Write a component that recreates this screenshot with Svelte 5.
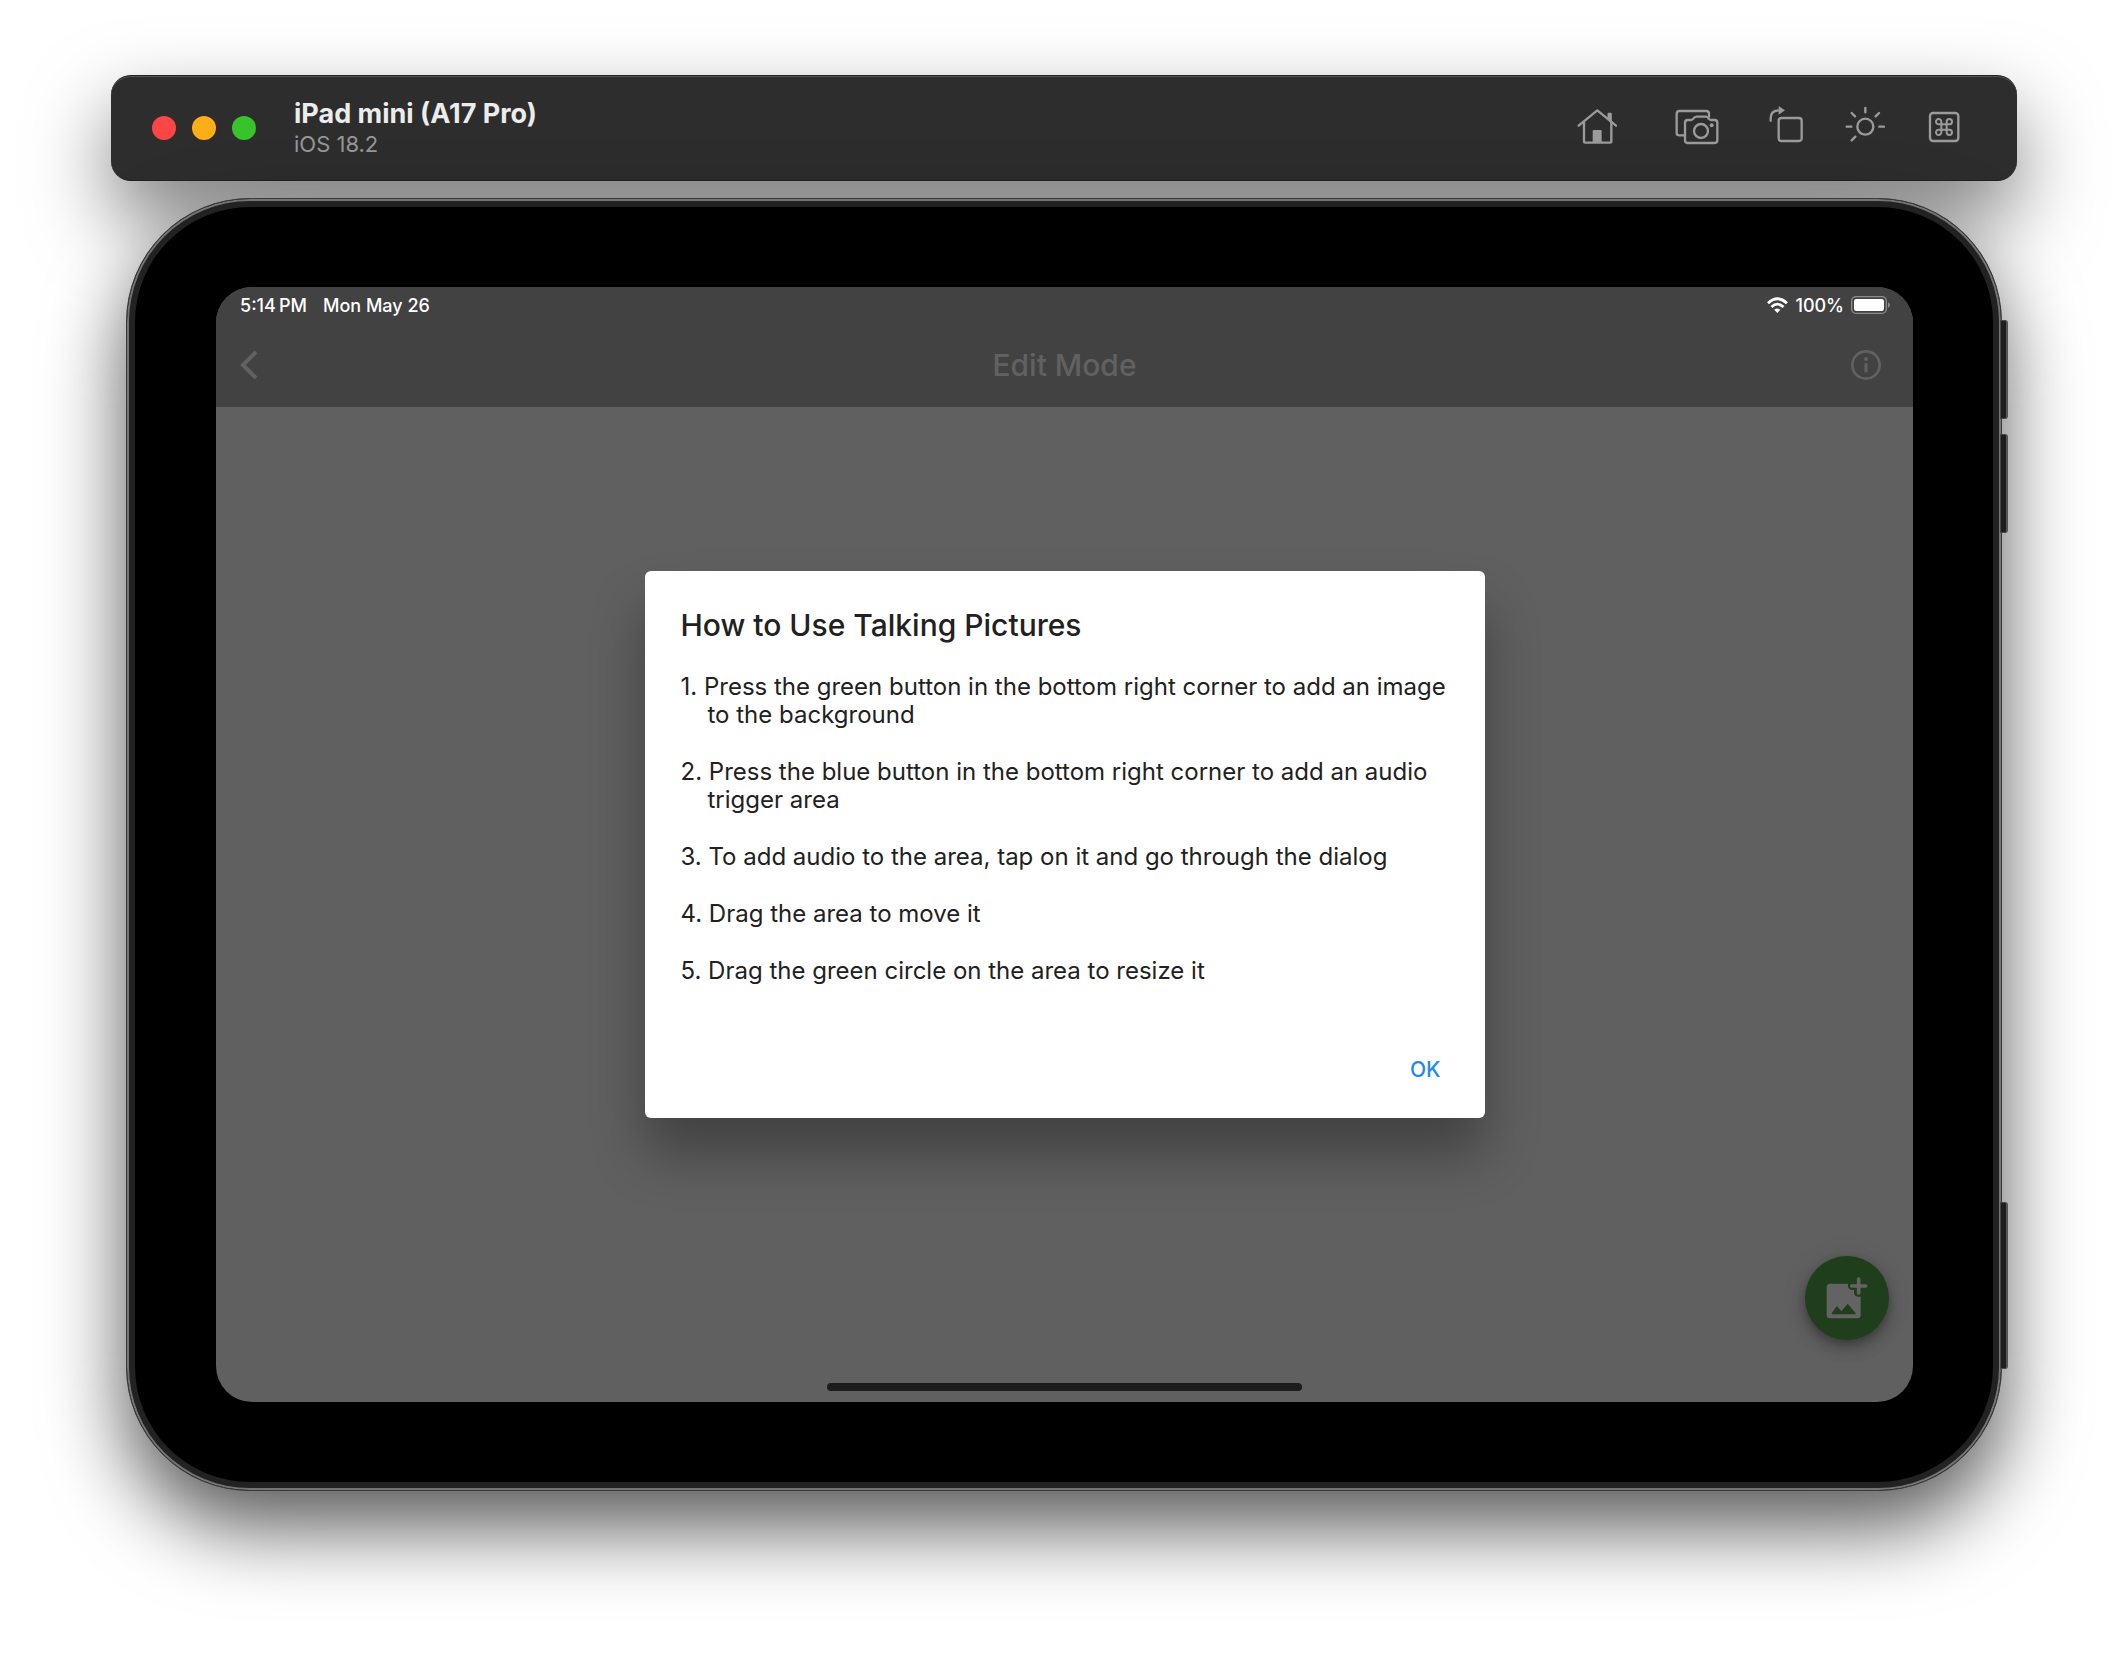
<script>
  const steps = [
    'Press the green button in the bottom right corner to add an image to the background',
    'Press the blue button in the bottom right corner to add an audio trigger area',
    'To add audio to the area, tap on it and go through the dialog',
    'Drag the area to move it',
    'Drag the green circle on the area to resize it'
  ];
</script>

<main class="desktop">
  <header class="toolbar">
    <div class="lights">
      <button class="light close" aria-label="Close"></button>
      <button class="light minimise" aria-label="Minimise"></button>
      <button class="light zoom" aria-label="Zoom"></button>
    </div>
    <div class="names">
      <strong class="device-name">iPad mini (A17 Pro)</strong>
      <span class="device-os">iOS 18.2</span>
    </div>
    <div class="tools">
      <button class="tool" aria-label="Home">
        <svg width="40" height="48" viewBox="112 132 120 144">
          <path d="M117 197 L173 151 L229 197" />
          <path d="M133 186 V244 Q133 248 137 248 H211 Q215 248 215 244 V186" />
          <path d="M207 178 V162 H213 V184" />
          <path class="solid" d="M159 213 Q159 210 162 210 H183 Q186 210 186 213 V248 H159 Z" />
        </svg>
      </button>
      <button class="tool" aria-label="Screenshot">
        <svg width="44" height="48" viewBox="406 132 132 144">
          <path d="M432 226 H419 Q411 226 411 218 V161 Q411 153 419 153 H500 Q508 153 508 161 V170" />
          <path d="M444 180 H454 Q458 180 461 176 Q465 170 471 170 H499 Q504 170 507 176 Q510 180 514 180 H525 Q533 180 533 188 V241 Q533 249 525 249 H444 Q436 249 436 241 V188 Q436 180 444 180 Z" />
          <circle cx="484" cy="213" r="21" />
          <circle class="solid" cx="516" cy="196" r="6" />
        </svg>
      </button>
      <button class="tool" aria-label="Rotate">
        <svg width="34" height="48" viewBox="688 132 102 144">
          <rect x="717" y="174" width="69" height="69" rx="8" />
          <path d="M693 182 V174 Q693 151 718 151" />
          <path class="solid" d="M717 138 L736 151 L717 164 Z" />
        </svg>
      </button>
      <button class="tool" aria-label="Appearance">
        <svg width="40" height="48" viewBox="916 132 120 144">
          <circle cx="977" cy="200" r="24" />
          <path d="M977 144 V157 M1018 159 L1008 169 M1033 200 H1019 M936 159 L946 169 M921 200 H935 M936 241 L947 230" />
        </svg>
      </button>
      <button class="tool" aria-label="Keyboard shortcuts">
        <svg width="32" height="48" viewBox="1164 132 96 144">
          <rect x="1170" y="159" width="85" height="84" rx="9" />
          <path class="thin" d="M1204 193 H1220 V209 H1204 Z M1204 193 H1197 A8 8 0 1 1 1204 185 Z M1220 193 V185 A8 8 0 1 1 1228 193 Z M1220 209 H1228 A8 8 0 1 1 1220 217 Z M1204 209 V217 A8 8 0 1 1 1197 209 Z" />
        </svg>
      </button>
    </div>
  </header>

  <section class="device">
    <i class="side-key volume-up"></i>
    <i class="side-key volume-down"></i>
    <i class="side-key power"></i>

    <div class="screen">
      <div class="bars">
        <div class="status">
          <span>5:14&#8201;PM</span>
          <span class="date">Mon May 26</span>
          <div class="status-right">
            <svg width="21" height="16" viewBox="147 81 61 46">
              <g fill="none" stroke="#fff" stroke-width="8">
                <path d="M150 99 Q177 73 205 99" />
                <path d="M160 110 Q177 93 195 110" />
              </g>
              <path fill="#fff" d="M168 118 Q177 110 186 118 L177 127 Z" />
            </svg>
            <span>100%</span>
            <svg width="40" height="18" viewBox="393 78 120 54">
              <rect x="395" y="80" width="104" height="50" rx="13" fill="none" stroke="#8c8c8c" stroke-width="4" />
              <rect x="402" y="87" width="90" height="36" rx="7" fill="#fff" />
              <path d="M504 97 Q510 100 510 105 Q510 110 504 113 Z" fill="#8c8c8c" />
            </svg>
          </div>
        </div>
        <nav class="nav">
          <button class="nav-button" aria-label="Back">
            <svg width="18" height="30" viewBox="0 0 18 30">
              <path d="M16 2 L3 15 L16 28" fill="none" stroke="#616161" stroke-width="4" />
            </svg>
          </button>
          <h1 class="nav-title">Edit Mode</h1>
          <button class="nav-button info" aria-label="Information">
            <svg width="30" height="30" viewBox="0 0 90 90">
              <circle cx="45" cy="45" r="41" fill="none" stroke="#616161" stroke-width="8" />
              <circle cx="45" cy="27" r="6" fill="#616161" />
              <path d="M45 43 V63" stroke="#616161" stroke-width="9" stroke-linecap="round" />
            </svg>
          </button>
        </nav>
      </div>

      <button class="add-image" aria-label="Add image">
        <svg width="42" height="42" viewBox="202 290 126 126">
          <path fill="#636363" d="M214 310 H268 V318 Q269 328 279 329 H286 V338 Q287 348 298 349 H306 V404 Q306 414 296 414 H214 Q204 414 204 404 V320 Q204 310 214 310 Z" />
          <path fill="#1f3e1b" d="M221 402 Q217 402 220 397 L235 377 L248 393 L267 370 L290 397 Q293 402 289 402 Z" />
          <path d="M300 296 V338 M279 317 H321" stroke="#636363" stroke-width="11" stroke-linecap="round" />
        </svg>
      </button>
      <i class="home-indicator"></i>

      <div class="overlay">
        <div class="dialog" role="dialog" aria-labelledby="dialog-title">
          <h2 id="dialog-title" class="dialog-title">How to Use Talking Pictures</h2>
          <ol class="steps">
            {#each steps as step, i}
              <li>{i + 1}. {step}</li>
            {/each}
          </ol>
          <button class="ok">OK</button>
        </div>
      </div>
    </div>
  </section>
</main>

<style>
  :global(body) {
    background: #fff;
  }

  .desktop {
    box-sizing: border-box;
    min-height: 100vh;
    padding: 75px 111px 164px;
    font-family: Inter, "Liberation Sans", sans-serif;
    overflow: hidden;
  }

  button {
    display: grid;
    place-items: center;
    padding: 0;
    border: 0;
    background: none;
    font-family: inherit;
  }

  svg {
    display: block;
  }

  .toolbar {
    box-sizing: border-box;
    display: flex;
    align-items: center;
    height: 106px;
    padding: 0 35px 0 41px;
    border: 1px solid #202120;
    border-width: 1px 0;
    border-radius: 20px;
    background: #2d2d2d;
    box-shadow:
      inset 0 1px 0 #545654,
      0 36px 80px rgba(0, 0, 0, 0.5);
  }

  .lights {
    display: flex;
    gap: 16px;
  }

  .light {
    width: 24px;
    height: 24px;
    border-radius: 50%;
  }

  .close {
    background: #fc4646;
  }

  .minimise {
    background: #fdae17;
  }

  .zoom {
    background: #38c32a;
  }

  .names {
    display: flex;
    flex-direction: column;
    margin-left: 38px;
  }

  .device-name {
    color: #ececec;
    font-size: 27px;
    line-height: 32px;
    font-weight: 700;
  }

  .device-os {
    color: #969696;
    font-size: 22px;
    line-height: 28px;
  }

  .tools {
    display: grid;
    grid-template-columns: 98px 102px 76px 82px 76px;
    margin-left: auto;
  }

  .tool svg {
    fill: none;
    stroke: #9b9b9b;
    stroke-width: 7;
    stroke-linecap: round;
    stroke-linejoin: round;
  }

  .tool .solid {
    fill: #9b9b9b;
    stroke: none;
  }

  .tool .thin {
    stroke-width: 6;
  }

  .device {
    position: relative;
    margin: 17px 15px 0;
    padding: 88px 88px 88px 89px;
    border: 1px solid #3a3a3a;
    border-radius: 124px;
    background: #000;
    box-shadow:
      inset 0 0 0 2px #747474,
      inset 0 0 0 8px #222,
      0 36px 80px rgba(0, 0, 0, 0.66);
  }

  .side-key {
    box-sizing: border-box;
    position: absolute;
    right: -7px;
    width: 8px;
    height: 99px;
    border: 1px solid #484848;
    border-right: 2px solid #555;
    border-radius: 0 3px 3px 0;
    background: #1e1e1e;
  }

  .volume-up {
    top: 121px;
  }

  .volume-down {
    top: 235px;
  }

  .power {
    bottom: 121px;
    height: 167px;
  }

  .screen {
    position: relative;
    aspect-ratio: 1697 / 1115;
    border-radius: 36px;
    background: #606060;
    overflow: hidden;
  }

  .bars {
    background: #424242;
  }

  .status {
    display: flex;
    align-items: center;
    height: 36px;
    padding: 0 22px 0 24px;
    color: #fff;
    font-size: 18px;
    font-weight: 500;
  }

  .date {
    margin-left: 16px;
  }

  .status-right {
    display: flex;
    align-items: center;
    gap: 7px;
    margin-left: auto;
  }

  .nav {
    display: grid;
    grid-template-columns: 60px 1fr 60px;
    align-items: center;
    height: 84px;
    padding: 0 12px;
  }

  .nav-button {
    justify-self: start;
    height: 60px;
    padding: 0 12px;
  }

  .info {
    justify-self: end;
    padding: 0 20px;
  }

  .nav-title {
    margin: 0;
    color: #616161;
    font-size: 30px;
    line-height: 36px;
    font-weight: 500;
    text-align: center;
  }

  .add-image {
    position: absolute;
    right: 24px;
    bottom: 62px;
    width: 84px;
    height: 84px;
    border-radius: 50%;
    background: #1f3e1b;
    box-shadow:
      0 4px 8px rgba(0, 0, 0, 0.2),
      0 9px 15px rgba(0, 0, 0, 0.18),
      0 2px 26px rgba(0, 0, 0, 0.1);
  }

  .home-indicator {
    position: absolute;
    right: 36%;
    bottom: 11px;
    left: 36%;
    height: 8px;
    border-radius: 4px;
    background: #1c1c1c;
  }

  .overlay {
    position: absolute;
    inset: 0;
    display: grid;
    place-items: center;
  }

  .dialog {
    box-sizing: border-box;
    display: flex;
    flex-direction: column;
    width: 840px;
    max-width: 90%;
    padding: 36px 32px 22px 36px;
    border-radius: 6px;
    background: #fff;
    color: #212121;
    box-shadow: 0 36px 54px rgba(0, 0, 0, 0.32);
  }

  .dialog-title {
    margin: 0 0 30px;
    font-size: 30px;
    line-height: 36px;
    font-weight: 500;
  }

  .steps {
    display: grid;
    gap: 29px;
    margin: 0;
    padding: 0;
    list-style: none;
    font-size: 24px;
    line-height: 28px;
  }

  .steps li {
    padding-left: 27px;
    text-indent: -27px;
  }

  .ok {
    align-self: flex-end;
    height: 54px;
    margin-top: 57px;
    padding: 0 12px;
    color: #2388f5;
    font-size: 21px;
    font-weight: 500;
  }
</style>
